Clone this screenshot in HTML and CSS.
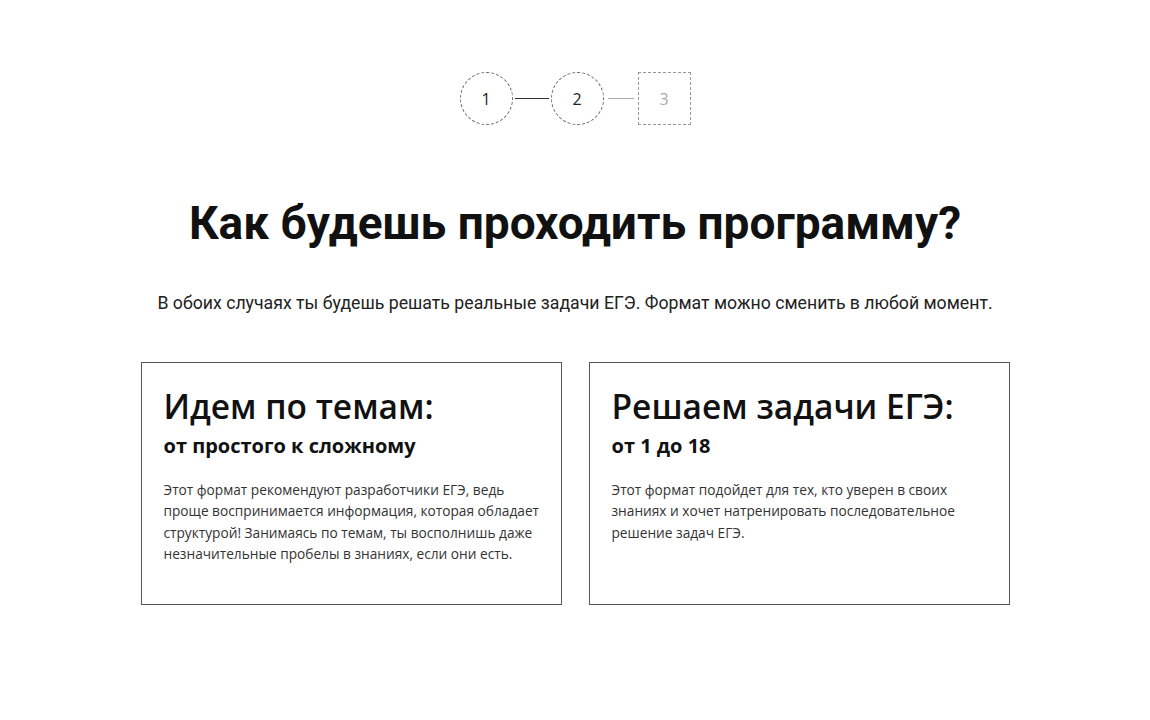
FILE: index.html
```html
<!DOCTYPE html>
<html lang="ru">
<head>
<meta charset="utf-8">
<link rel="stylesheet" href="styles.css">
</head>
<body>
<main class="page">
  <div class="steps">
    <div class="step step-circle">1</div>
    <div class="link link-dark"></div>
    <div class="step step-circle">2</div>
    <div class="link link-light"></div>
    <div class="step step-square">3</div>
  </div>
  <h1 class="title">Как будешь проходить программу?</h1>
  <p class="lead">В обоих случаях ты будешь решать реальные задачи ЕГЭ. Формат можно сменить в любой момент.</p>
  <div class="cards">
    <div class="card">
      <h2 class="card-title">Идем по темам:</h2>
      <h3 class="card-sub">от простого к сложному</h3>
      <p class="card-text">Этот формат рекомендуют разработчики ЕГЭ, ведь проще воспринимается информация, которая обладает структурой! Занимаясь по темам, ты восполнишь даже незначительные пробелы в знаниях, если они есть.</p>
    </div>
    <div class="card">
      <h2 class="card-title">Решаем задачи ЕГЭ:</h2>
      <h3 class="card-sub">от 1 до 18</h3>
      <p class="card-text">Этот формат подойдет для тех, кто уверен в своих знаниях и хочет натренировать последовательное решение задач ЕГЭ.</p>
    </div>
  </div>
</main>
</body>
</html>
```

FILE: styles.css
```css
html, body {
  margin: 0;
  padding: 0;
  background: #fff;
}
.page {
  display: flex;
  flex-direction: column;
  align-items: center;
  padding-top: 72px;
  font-family: "Open Sans", "Noto Sans", sans-serif;
  color: #111;
}
.steps {
  display: flex;
  align-items: center;
}
.step {
  width: 51px;
  height: 51px;
  border: 1px dashed #666;
  display: flex;
  align-items: center;
  justify-content: center;
  font-family: "Open Sans", sans-serif;
  font-size: 16px;
  color: #222;
}
.step-circle {
  border-radius: 50%;
}
.step-square {
  border-color: #999;
  color: #aaa;
}
.link {
  height: 1px;
}
.link-dark {
  width: 34px;
  margin: 0 2px;
  background: #333;
}
.link-light {
  width: 26px;
  margin: 0 4px;
  background: #aaa;
}
.title {
  margin: 70px 0 0;
  font-family: "Roboto", sans-serif;
  font-weight: 700;
  font-size: 46px;
  line-height: 56px;
  color: #111;
}
.lead {
  margin: 41px 0 0;
  font-family: "Roboto", sans-serif;
  font-size: 17.7px;
  line-height: 22px;
  color: #222;
}
.cards {
  display: flex;
  gap: 27px;
  margin-top: 48px;
}
.card {
  box-sizing: border-box;
  width: 421px;
  height: 243px;
  border: 1px solid #555;
  padding: 22px 9px 24px 22px;
}
.card-title {
  margin: 0;
  font-size: 33.5px;
  line-height: 42px;
  font-weight: 600;
  color: #111;
}
.card-sub {
  margin: 6px 0 0;
  font-size: 20px;
  line-height: 26px;
  font-weight: 700;
  color: #111;
}
.card-text {
  margin: 20px 0 0;
  font-size: 13.7px;
  line-height: 21.3px;
  color: #333;
}
```
